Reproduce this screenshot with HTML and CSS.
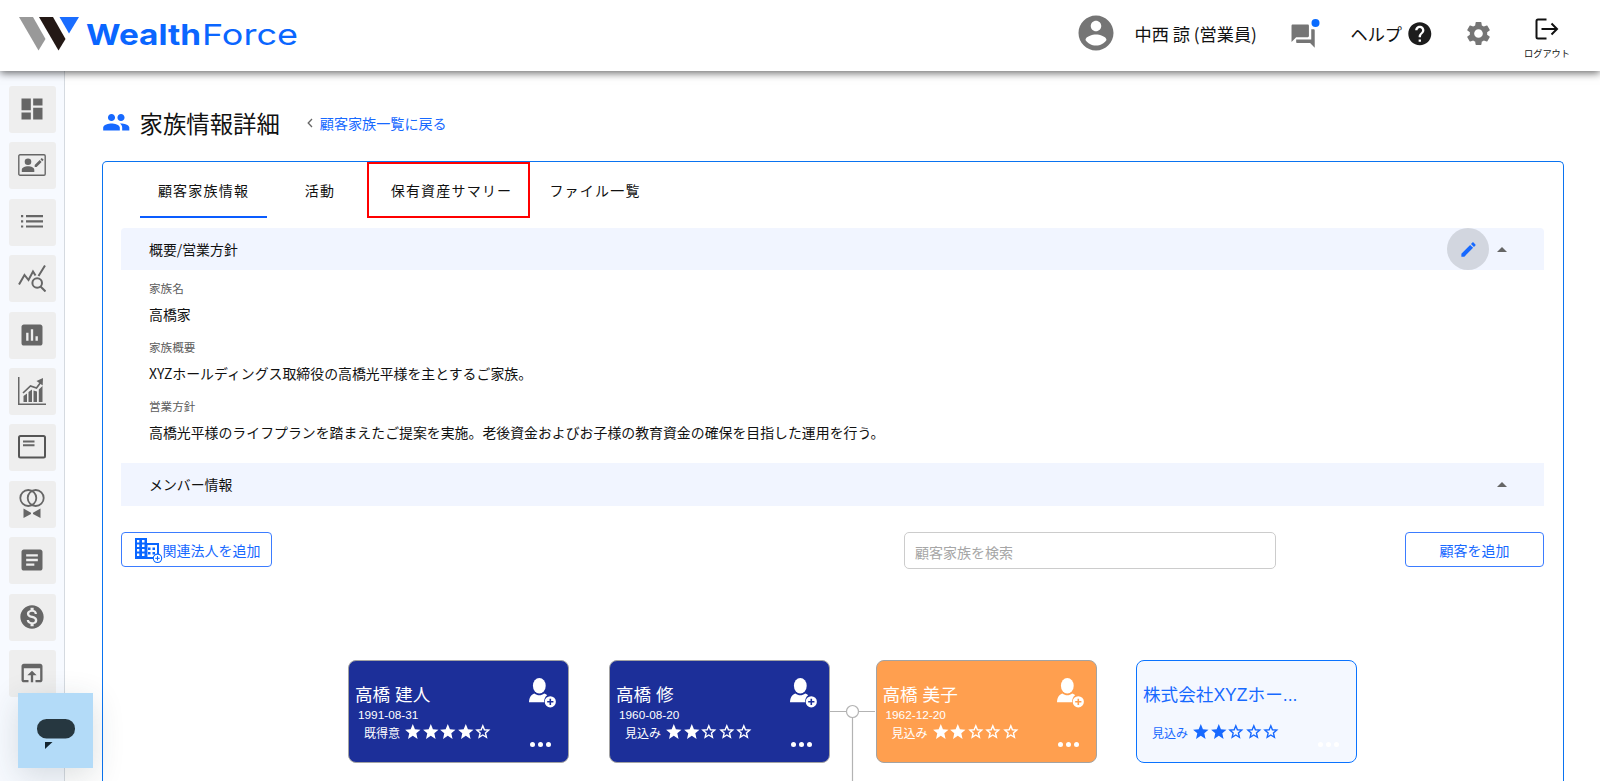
FILE: index.html
```html
<!DOCTYPE html>
<html lang="ja">
<head>
    <meta charset="UTF-8">
    <meta name="viewport" content="width=device-width, initial-scale=1.0">
    <title>家族情報詳細 - WealthForce</title>
    <link rel="stylesheet" href="styles.css">
</head>
<body>
    <!-- アイコン定義 -->
    <svg class="defs" width="0" height="0">
        <symbol id="star" viewBox="0 0 24 24"><path d="M12 17.500 18.500 21.700l-1.700-7.600L22.500 9.200l-7.600-.65L12 1.500 9.100 8.550 1.500 9.200l5.700 4.900-1.700 7.600z"/></symbol>
        <symbol id="star-o" viewBox="0 0 24 24"><path d="M12 3.800 14.200 9.200l5.900.5-4.500 3.900 1.350 5.800L12 16.300l-4.950 3.100 1.350-5.800L3.900 9.700l5.900-.5z" fill="none" stroke="currentColor" stroke-width="1.900"/></symbol>
        <symbol id="add-person" viewBox="0 0 27 30">
            <ellipse cx="10.3" cy="7.8" rx="6.4" ry="7.8"/>
            <path d="M0 24.3c.2-4.600 2-7.800 5.400-8.800 3 2.400 6.800 2.400 9.800 0 1.400.3 2.400.9 3 1.700-1.800 1.200-3.300 3.600-3.100 7.100z"/>
            <path fill-rule="evenodd" d="M21.300 18.200a5.600 5.600 0 1 0 0 11.200 5.600 5.600 0 0 0 0-11.200zm-.8 2.500h1.600v2.300h2.300v1.600h-2.300v2.300h-1.600v-2.300h-2.300V23h2.300z"/>
        </symbol>
    </svg>

    <header class="header">
        <svg class="logo" width="280" height="40" viewBox="0 0 280 40">
            <path fill="#999" d="M0 3h14l12.500 22-7 11.500z"/>
            <path fill="#231815" d="M20 3h14l12.500 22-7 11.500z"/>
            <path fill="#1a6dff" d="M40.500 3H60L50 19.500z"/>
            <text class="logo-bold" x="67" y="31" textLength="115" lengthAdjust="spacingAndGlyphs">Wealth</text>
            <text class="logo-light" x="183" y="31" textLength="96" lengthAdjust="spacingAndGlyphs">Force</text>
        </svg>
        <div class="header-menu">
            <svg class="avatar" width="42" height="42" viewBox="0 0 24 24"><path d="M12 2C6.480 2 2 6.480 2 12s4.480 10 10 10 10-4.480 10-10S17.520 2 12 2zm0 3c1.660 0 3 1.340 3 3s-1.340 3-3 3-3-1.340-3-3 1.340-3 3-3zm0 14.200c-2.500 0-4.710-1.280-6-3.220.03-1.990 4-3.080 6-3.080 1.990 0 5.970 1.090 6 3.080-1.290 1.940-3.500 3.220-6 3.220z"/></svg>
            <span class="user-name">中西 諒 (営業員)</span>
            <svg class="talk" width="32" height="32" viewBox="0 0 32 32">
                <path fill="#757575" transform="translate(1.200 4.200) scale(1.160)" d="M21 6h-2v9H6v2c0 .55.45 1 1 1h11l4 4V7c0-.55-.45-1-1-1zm-4 6V3c0-.55-.45-1-1-1H3c-.55 0-1 .45-1 1v14l4-4h10c.55 0 1-.45 1-1z"/>
                <circle fill="#fff" cx="27.500" cy="5" r="5"/>
                <circle fill="#0a6cff" cx="27.500" cy="5" r="4"/>
            </svg>
            <span class="help">ヘルプ</span>
            <svg class="help-icon" width="27.600" height="27.600" viewBox="0 0 24 24"><path d="M12 2C6.480 2 2 6.480 2 12s4.480 10 10 10 10-4.480 10-10S17.520 2 12 2zm1 17h-2v-2h2v2zm2.070-7.750-.9.920C13.450 12.900 13 13.500 13 15h-2v-.5c0-1.100.45-2.100 1.170-2.830l1.240-1.260c.37-.36.59-.86.59-1.410 0-1.100-.9-2-2-2s-2 .9-2 2H8c0-2.210 1.790-4 4-4s4 1.790 4 4c0 .88-.36 1.680-.93 2.250z"/></svg>
            <svg class="gear" width="29" height="29" viewBox="0 0 24 24"><path d="M19.140 12.940c.04-.3.060-.61.060-.94 0-.32-.02-.64-.07-.94l2.030-1.580c.18-.14.230-.41.120-.61l-1.920-3.320c-.12-.22-.37-.29-.59-.22l-2.390.96c-.5-.38-1.030-.7-1.620-.94l-.36-2.540c-.04-.24-.24-.41-.48-.41h-3.840c-.24 0-.43.17-.47.41l-.36 2.540c-.59.24-1.130.57-1.620.94l-2.390-.96c-.22-.08-.47 0-.59.22L2.740 8.870c-.12.210-.08.470.12.610l2.030 1.580c-.05.3-.09.63-.09.94s.02.64.07.94l-2.030 1.580c-.18.140-.23.410-.12.610l1.920 3.320c.12.220.37.290.59.220l2.390-.96c.5.380 1.030.7 1.620.94l.36 2.540c.05.240.24.410.48.410h3.840c.24 0 .44-.17.470-.41l.36-2.540c.59-.24 1.130-.56 1.620-.94l2.390.96c.22.080.47 0 .59-.22l1.920-3.320c.12-.22.070-.47-.12-.61l-2.010-1.580zM12 15.600c-1.980 0-3.600-1.620-3.600-3.600s1.620-3.600 3.600-3.600 3.600 1.620 3.600 3.600-1.620 3.600-3.600 3.600z"/></svg>
            <div class="logout">
                <svg width="24" height="22" viewBox="0 0 24 22" fill="none" stroke="#111" stroke-width="2"><path d="M11.500 1.500H3Q1.500 1.500 1.500 3v16Q1.500 20.500 3 20.500h8.500M6.500 11H21M16.500 5.500 22 11l-5.500 5.500"/></svg>
                <span>ログアウト</span>
            </div>
        </div>
    </header>

    <div class="layout">
        <nav class="sidebar">
            <a class="nav-item"><svg width="28" height="28" viewBox="0 0 24 24"><path d="M3 13h8V3H3v10zm0 8h8v-6H3v6zm10 0h8V11h-8v10zm0-18v6h8V3h-8z"/></svg></a>
            <a class="nav-item"><svg width="28" height="22" viewBox="0 0 28 22"><rect x=".8" y=".8" width="26.400" height="20.400" rx="1.200" fill="none" stroke="#666" stroke-width="1.400"/><circle cx="10" cy="7.800" r="3.300"/><path d="M3.800 18v-2c0-5 12.500-5 12.500 0v2zM16.700 11l5-5 1.900 1.900-5 5h-1.900zM22.400 5.300l1.400-1.400 1.900 1.900-1.400 1.400z"/></svg></a>
            <a class="nav-item"><svg width="22" height="13" viewBox="0 0 22 13"><path d="M0 0h2.200v2.200H0zM5 0h17v2.200H5zM0 5.200h2.200v2.200H0zM5 5.200h17v2.200H5zM0 10.400h2.200v2.200H0zM5 10.400h17v2.200H5z"/></svg></a>
            <a class="nav-item"><svg width="28" height="28" viewBox="0 0 28 28" fill="none" stroke="#666" stroke-width="2"><path d="M1 20.500 6.500 11l4 5L15 7.500l2.500 4M20.500 12 27 1.500"/><circle cx="19.200" cy="19" r="4.800"/><path d="m22.500 22.500 5 5"/></svg></a>
            <a class="nav-item"><svg width="28" height="28" viewBox="0 0 24 24"><path d="M19 3H5c-1.100 0-2 .9-2 2v14c0 1.100.9 2 2 2h14c1.100 0 2-.9 2-2V5c0-1.100-.9-2-2-2zM9 17H7v-7h2v7zm4 0h-2V7h2v10zm4 0h-2v-4h2v4z"/></svg></a>
            <a class="nav-item"><svg width="28" height="28" viewBox="0 0 28 28"><path d="M0 0h1.500v26.500H28V28H0zM5.500 19 9 16.500V25H5.500zM10.500 15l3.500-2.500V25h-3.500zM15.500 13.500l3.500 1V25h-3.500zM20.800 12.500 24.500 9v16h-3.700z"/><path d="M5 16 12.500 9l6 2L23 5" fill="none" stroke="#666" stroke-width="1.700"/><path d="m18.500 4 6.500-3-.3 7.500z"/></svg></a>
            <a class="nav-item"><svg width="28" height="24" viewBox="0 0 28 24"><rect x="1" y="1" width="26" height="21.500" rx="1.500" fill="none" stroke="#555" stroke-width="2"/><path d="M5 5.500h11.500v2H5zM5 9.300h11.500v2H5z"/></svg></a>
            <a class="nav-item"><svg width="26" height="30" viewBox="0 0 26 30"><g fill="none" stroke="#666" stroke-width="1.800"><circle cx="9.300" cy="9" r="8"/><circle cx="16.700" cy="9" r="8"/></g><path d="m4.500 19.500 7.500 4.200v1.200l-7.500 4.200zM21.500 19.500 14 23.700v1.200l7.500 4.200z"/></svg></a>
            <a class="nav-item"><svg width="28" height="28" viewBox="0 0 24 24"><path d="M19 3H5c-1.100 0-2 .9-2 2v14c0 1.100.9 2 2 2h14c1.100 0 2-.9 2-2V5c0-1.100-.9-2-2-2zm-5 14H7v-2h7v2zm3-4H7v-2h10v2zm0-4H7V7h10v2z"/></svg></a>
            <a class="nav-item"><svg width="28" height="28" viewBox="0 0 24 24"><path d="M12 2C6.480 2 2 6.480 2 12s4.480 10 10 10 10-4.480 10-10S17.520 2 12 2zm1.410 16.090V20h-2.670v-1.930c-1.710-.36-3.160-1.460-3.270-3.400h1.960c.1 1.050.82 1.870 2.650 1.870 1.960 0 2.400-.98 2.400-1.590 0-.83-.44-1.610-2.670-2.140-2.480-.6-4.180-1.620-4.180-3.670 0-1.720 1.390-2.840 3.110-3.210V4h2.670v1.950c1.860.45 2.790 1.860 2.850 3.390H14.300c-.05-1.110-.64-1.870-2.220-1.870-1.500 0-2.400.68-2.400 1.640 0 .84.65 1.390 2.670 1.910s4.180 1.390 4.180 3.910c-.01 1.830-1.380 2.830-3.120 3.160z"/></svg></a>
            <a class="nav-item"><svg width="28" height="28" viewBox="0 0 24 24"><path d="M19 4H5c-1.110 0-2 .9-2 2v12c0 1.100.89 2 2 2h4v-2H5V8h14v10h-4v2h4c1.100 0 2-.9 2-2V6c0-1.100-.89-2-2-2zm-7 6-4 4h3v6h2v-6h3l-4-4z"/></svg></a>
        </nav>

        <main class="main">
            <div class="page-title">
                <svg width="28.500" height="28.500" viewBox="0 0 24 24"><path fill="#1769ff" d="M16 11c1.660 0 2.990-1.340 2.990-3S17.660 5 16 5c-1.660 0-3 1.340-3 3s1.340 3 3 3zm-8 0c1.660 0 2.990-1.340 2.990-3S9.660 5 8 5C6.340 5 5 6.340 5 8s1.340 3 3 3zm0 2c-2.330 0-7 1.170-7 3.500V19h14v-2.500c0-2.330-4.670-3.500-7-3.500zm8 0c-.29 0-.62.02-.97.05 1.160.84 1.970 1.970 1.970 3.450V19h6v-2.500c0-2.330-4.670-3.500-7-3.500z"/></svg>
                <h1>家族情報詳細</h1>
                <svg class="chevron" width="6" height="10" viewBox="0 0 6 10"><path d="M5 1 1.200 5 5 9" fill="none" stroke="#666" stroke-width="1.300"/></svg>
                <a class="back-link">顧客家族一覧に戻る</a>
            </div>

            <section class="panel">
                <div class="tabs">
                    <div class="tab tab-info active">顧客家族情報</div>
                    <div class="tab tab-activity">活動</div>
                    <div class="tab tab-assets">保有資産サマリー</div>
                    <div class="tab tab-files">ファイル一覧</div>
                </div>

                <div class="band band-top">
                    <span class="band-title">概要/営業方針</span>
                    <div class="band-actions">
                        <span class="edit"><svg width="19" height="19" viewBox="0 0 24 24"><path fill="#1769ff" d="M3 17.250V21h3.750L17.810 9.940l-3.750-3.750L3 17.250zM20.710 7.040c.39-.39.39-1.020 0-1.410l-2.340-2.340c-.39-.39-1.020-.39-1.410 0l-1.830 1.830 3.750 3.750 1.830-1.830z"/></svg></span>
                        <span class="arrow"></span>
                    </div>
                </div>

                <dl class="summary">
                    <dt>家族名</dt>
                    <dd>高橋家</dd>
                    <dt>家族概要</dt>
                    <dd>XYZホールディングス取締役の高橋光平様を主とするご家族。</dd>
                    <dt>営業方針</dt>
                    <dd>高橋光平様のライフプランを踏まえたご提案を実施。老後資金およびお子様の教育資金の確保を目指した運用を行う。</dd>
                </dl>

                <div class="band">
                    <span class="band-title">メンバー情報</span>
                    <div class="band-actions"><span class="arrow"></span></div>
                </div>

                <div class="toolbar">
                    <button class="btn btn-corp">
                        <svg width="28" height="26" viewBox="0 0 28 26">
                            <path fill="#0a66ff" fill-rule="evenodd" d="M0 0h12v5h12v16H0zM2 2v2.500h2.300V2zM2 6.500V9h2.300V6.500zM2 11v2.500h2.300V11zm0 4.500V18h2.300v-2.500zM7 2v2.500h2.500V2zm0 4.500V9h2.500V6.500zM7 11v2.500h2.500V11zm0 4.500V18h2.500v-2.500zM12.500 7v12H22V7z"/>
                            <path fill="#0a66ff" d="M13 9.500h2.500V12H13zM17.500 9.500H20V12h-2.500zM13 14h2.500v2.500H13zM17.500 14H20v2.500h-2.500z"/>
                            <circle cx="22.500" cy="20.300" r="4.200" fill="#fff" stroke="#0a66ff" stroke-width="1.100"/>
                            <path d="M20.300 20.300h4.400M22.500 18.100v4.400" stroke="#0a66ff" stroke-width="1"/>
                        </svg>関連法人を追加
                    </button>
                    <input class="search" type="text" placeholder="顧客家族を検索">
                    <button class="btn btn-add">顧客を追加</button>
                </div>

                <!-- 家系図 -->
                <div class="tree">
                    <svg class="lines" width="60" height="90" viewBox="0 0 60 90" fill="none" stroke="#b3b3b3" stroke-width="1.200">
                        <path d="M0 20.500h46M23.500 26v64"/>
                        <circle cx="23.500" cy="20.500" r="6" fill="#fff"/>
                    </svg>
                    <div class="card card-1">
                        <div class="card-name">高橋 建人</div>
                        <div class="card-date">1991-08-31</div>
                        <div class="card-rank"><span>既得意</span>
                            <svg><use href="#star"/></svg><svg><use href="#star"/></svg><svg><use href="#star"/></svg><svg><use href="#star"/></svg><svg><use href="#star-o"/></svg>
                        </div>
                        <svg class="card-add"><use href="#add-person"/></svg>
                        <div class="dots"><i></i><i></i><i></i></div>
                    </div>
                    <div class="card card-2">
                        <div class="card-name">高橋 修</div>
                        <div class="card-date">1960-08-20</div>
                        <div class="card-rank"><span>見込み</span>
                            <svg><use href="#star"/></svg><svg><use href="#star"/></svg><svg><use href="#star-o"/></svg><svg><use href="#star-o"/></svg><svg><use href="#star-o"/></svg>
                        </div>
                        <svg class="card-add"><use href="#add-person"/></svg>
                        <div class="dots"><i></i><i></i><i></i></div>
                    </div>
                    <div class="card card-3">
                        <div class="card-name">高橋 美子</div>
                        <div class="card-date">1962-12-20</div>
                        <div class="card-rank"><span>見込み</span>
                            <svg><use href="#star"/></svg><svg><use href="#star"/></svg><svg><use href="#star-o"/></svg><svg><use href="#star-o"/></svg><svg><use href="#star-o"/></svg>
                        </div>
                        <svg class="card-add"><use href="#add-person"/></svg>
                        <div class="dots"><i></i><i></i><i></i></div>
                    </div>
                    <div class="card card-4">
                        <div class="card-name">株式会社XYZホー...</div>
                        <div class="card-date"></div>
                        <div class="card-rank"><span>見込み</span>
                            <svg><use href="#star"/></svg><svg><use href="#star"/></svg><svg><use href="#star-o"/></svg><svg><use href="#star-o"/></svg><svg><use href="#star-o"/></svg>
                        </div>
                        <div class="dots"><i></i><i></i><i></i></div>
                    </div>
                </div>
            </section>
        </main>
    </div>

    <div class="chat">
        <svg width="38" height="31" viewBox="0 0 38 31"><rect width="38" height="19.500" rx="9.500" fill="#263740"/><path fill="#14252f" d="M8 23h7.500L8 30z"/></svg>
    </div>
</body>
</html>
```
FILE: styles.css
```css
* {
    box-sizing: border-box;
}
body {
    margin: 0;
    height: 781px;
    overflow: hidden;
    background-color: #fff;
    color: #111;
    font-family: "Noto Sans CJK JP", sans-serif;
    font-size: 13.9px;
}
svg {
    display: block;
    flex-shrink: 0;
}
.defs {
    position: absolute;
}

/* ヘッダー */
.header {
    position: relative;
    z-index: 2;
    display: flex;
    justify-content: space-between;
    height: 71px;
    padding: 0 30px 0 19px;
    background-color: #fff;
    box-shadow: 0 2px 8px rgba(0, 0, 0, 0.6);
}
.logo {
    margin-top: 14px;
}
.logo-bold, .logo-light {
    font-family: Inter, sans-serif;
    font-size: 29px;
    fill: #0a66ff;
}
.logo-bold {
    font-weight: 700;
}
.logo-light {
    font-weight: 400;
}
.header-menu {
    display: flex;
    align-items: center;
    height: 67px;
    font-size: 17.2px;
}
.avatar {
    fill: #757575;
    margin: -2px 17px 0 0;
}
.user-name {
    width: 154px;
}
.help {
    margin-left: 30px;
    width: 56px;
}
.help-icon {
    fill: #1c1c1c;
}
.gear {
    fill: #757575;
    margin-left: 30px;
}
.logout {
    display: flex;
    flex-direction: column;
    align-items: center;
    margin-left: 31px;
    padding-top: 11px;
    font-size: 9.2px;
}
.logout span {
    line-height: 14px;
    margin-top: 6px;
}

/* サイドバー */
.layout {
    display: flex;
    height: 710px;
    overflow: hidden;
}
.sidebar {
    width: 65px;
    flex-shrink: 0;
    padding: 15px 0 0 9px;
    background-color: #f7faff;
    border-right: 1px solid #d5dae0;
}
.nav-item {
    display: flex;
    align-items: center;
    justify-content: center;
    width: 47px;
    height: 47px;
    margin-bottom: 9.4px;
    padding: 0 1px 1px 0;
    background-color: #eee;
    border-radius: 3px;
    fill: #666;
}

/* メイン */
.main {
    flex: 1;
    display: flex;
    flex-direction: column;
    padding: 35px 36px 0 37px;
}
.page-title {
    display: flex;
    align-items: center;
    height: 34px;
    padding-bottom: 1px;
}
.page-title h1 {
    margin: 0 27px 0 9px;
    font-size: 23.4px;
    font-weight: 400;
    line-height: 32px;
}
.back-link {
    margin-left: 7px;
    color: #1769ff;
    font-size: 14.1px;
}
.panel {
    flex: 1;
    min-height: 0;
    margin-top: 21px;
    padding: 0 19px 0 18px;
    border: 1px solid #0a73f0;
    border-bottom: 0;
    border-radius: 5px 5px 0 0;
    overflow: hidden;
}
.tabs {
    display: flex;
    height: 66px;
    padding-left: 19px;
}
.tab {
    position: relative;
    height: 56px;
    line-height: 56px;
    text-align: center;
    font-size: 14px;
    letter-spacing: 1.2px;
}
.tab-info {
    width: 127px;
}
.tab-activity {
    width: 106px;
}
.tab-assets {
    width: 157px;
}
.tab-files {
    width: 130px;
}
.active {
    border-bottom: 2.5px solid #0a5cff;
}
.tab-assets::after {
    content: "";
    position: absolute;
    left: -6px;
    right: 0;
    top: 0;
    bottom: 0;
    border: 2px solid #f00;
}
.band {
    display: flex;
    align-items: center;
    justify-content: space-between;
    height: 43px;
    padding: 0 37px 0 28px;
    background-color: #f1f5ff;
}
.band-top {
    height: 42px;
    border-radius: 4px 4px 0 0;
}
.band-title {
    padding-bottom: 1px;
}
.band-actions {
    display: flex;
    align-items: center;
}
.edit {
    display: flex;
    align-items: center;
    justify-content: center;
    width: 42px;
    height: 42px;
    margin-right: 8px;
    border-radius: 50%;
    background-color: #d2d6df;
}
.arrow {
    border: 5.5px solid transparent;
    border-top: 0;
    border-bottom-color: #666;
}
.summary {
    margin: 0;
    padding: 8px 0 0 28px;
    height: 193px;
}
.summary dt {
    height: 20px;
    line-height: 20px;
    font-size: 11.6px;
    color: #5c5c5c;
}
.summary dd {
    margin: 0 0 7px;
    height: 32px;
    line-height: 33px;
}

/* ツールバー */
.toolbar {
    display: flex;
    align-items: flex-start;
    padding-top: 26px;
}
.btn {
    display: flex;
    align-items: center;
    justify-content: center;
    height: 35px;
    padding: 0;
    background-color: #fff;
    border: 1px solid #3b7cff;
    border-radius: 4px;
    color: #1769ff;
    font-family: inherit;
    font-size: 14px;
}
.btn-corp {
    width: 151px;
    padding-left: 2px;
}
.btn-corp svg {
    margin-top: 2px;
}
.btn-add {
    width: 139px;
    margin-left: auto;
}
.search {
    width: 372px;
    height: 37px;
    margin-left: 632px;
    padding: 3px 10px 0;
    border: 1px solid #ccc;
    border-radius: 5px;
    font-family: inherit;
    font-size: 14px;
}
.search::placeholder {
    color: #a6a6a6;
}

/* 家系図 */
.tree {
    position: relative;
    height: 200px;
}
.lines {
    position: absolute;
    left: 708px;
    top: 122px;
}
.card {
    position: absolute;
    top: 91px;
    width: 221px;
    height: 103px;
    padding: 22px 0 0 6px;
    border: 1px solid #a3a3a3;
    border-radius: 8px;
    color: #fff;
    fill: #fff;
    font-family: "Liberation Sans", "Noto Sans CJK JP", sans-serif;
}
.card-1 {
    left: 227px;
    background-color: #1c2f99;
}
.card-2 {
    left: 488px;
    background-color: #1c2f99;
}
.card-3 {
    left: 754.5px;
    background-color: #ff9f4f;
}
.card-4 {
    left: 1015px;
    background-color: #f4f8ff;
    border-color: #0a73ff;
    color: #1769ff;
    fill: #1769ff;
}
.card-name {
    height: 24px;
    line-height: 24px;
    font-size: 17.6px;
}
.card-date {
    height: 16px;
    line-height: 17px;
    padding-left: 3px;
    font-size: 11.8px;
}
.card-rank {
    display: flex;
    align-items: center;
    height: 18px;
    padding-left: 9px;
    font-size: 12px;
}
.card-rank span {
    width: 40px;
}
.card-rank svg {
    width: 17.6px;
    height: 17.6px;
}
.card-add {
    position: absolute;
    right: 12px;
    top: 17px;
    width: 27px;
    height: 30px;
}
.dots {
    position: absolute;
    right: 17px;
    bottom: 15px;
    display: flex;
    gap: 3px;
}
.dots i {
    width: 5px;
    height: 5px;
    border-radius: 50%;
    background-color: #fff;
}

/* チャット */
.chat {
    position: absolute;
    left: 18px;
    top: 693px;
    z-index: 3;
    display: flex;
    align-items: center;
    justify-content: center;
    width: 75px;
    height: 75px;
    padding-top: 8px;
    background-color: #b3dbf8;
    box-shadow: 0 8px 32px rgba(38, 55, 64, 0.16);
}
```
